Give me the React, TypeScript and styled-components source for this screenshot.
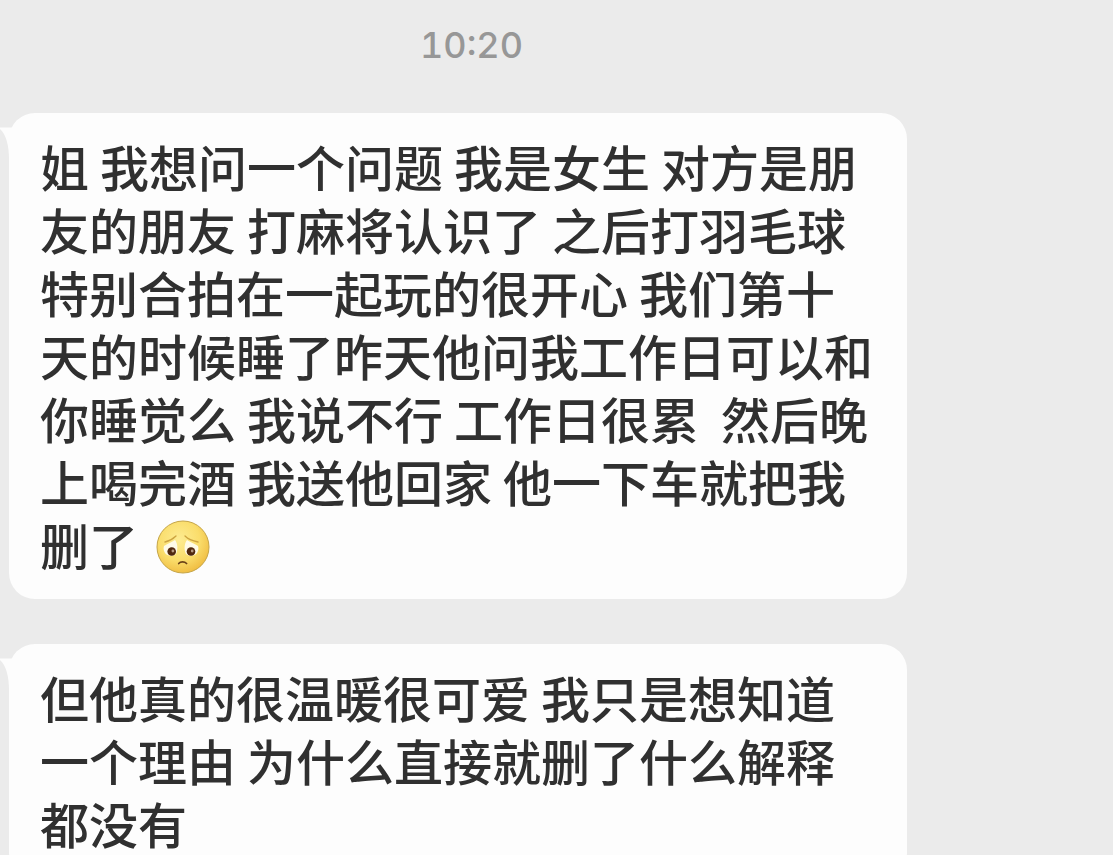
import React from "react";
import styled, { createGlobalStyle } from "styled-components";

const GlobalStyle = createGlobalStyle`
  * { box-sizing: border-box; }
  html, body { margin: 0; background: #ebebeb; }
  body { overflow: hidden; }
`;

const Chat = styled.main`
  height: 100vh;
  overflow: hidden;
  display: flex;
  flex-direction: column;
  font-family: "Noto Sans CJK SC", sans-serif;
  color: #303030;
`;

const Time = styled.time`
  margin: 23px 170px 46px 0;
  text-align: center;
  font: 500 36px/44px Inter, sans-serif;
  font-variant-numeric: tabular-nums;
  color: #979797;
`;

const Bubble = styled.article`
  position: relative;
  flex: none;
  margin: 0 206px 45px 9px;
  padding: 21px 32px 24px 31px;
  border-radius: 26px;
  background: #fdfdfd;
`;

const Tail = styled.svg`
  position: absolute;
  left: -9px;
  top: 12px;
`;

const Line = styled.p`
  margin: 0;
  font-size: 49px;
  line-height: 63px;
  font-weight: 500;
  white-space: pre;
`;

const Face = styled.svg`
  margin-left: 6px;
  vertical-align: -10px;
`;

function SadFace() {
  return (
    <Face width="56" height="56" viewBox="0 0 56 56" role="img" aria-label="sad face">
      <defs>
        <radialGradient id="skin" cx="0.42" cy="0.36" r="0.66">
          <stop offset="0" stopColor="#fdec92" />
          <stop offset="0.6" stopColor="#fadd6b" />
          <stop offset="1" stopColor="#f0bd42" />
        </radialGradient>
      </defs>
      <circle cx="28" cy="28" r="26" fill="url(#skin)" stroke="#c5a548" strokeWidth="1" />
      <path d="M9 27C12 25 17 23 20 21C23 25 23 31 21 35C18 38 12 37 10 34C9 32 8 30 9 27Z" fill="#fffbe8" />
      <path d="M43 27C40 25 35 23 32 21C29 25 29 31 31 35C34 38 40 37 42 34C43 32 44 30 43 27Z" fill="#fffbe8" />
      <g fill="none" stroke="#cda440" strokeWidth="1.3" strokeLinecap="round">
        <path d="M10 23C14 22 18 20 21 17" />
        <path d="M30 17C33 20 38 22 43 23" />
      </g>
      <circle cx="16.7" cy="32.5" r="4.3" fill="#50280f" />
      <circle cx="36" cy="32.5" r="4.3" fill="#50280f" />
      <circle cx="17.9" cy="32" r="1.4" fill="#b69a83" />
      <circle cx="37.2" cy="32" r="1.4" fill="#b69a83" />
      <path d="M23.7 44.5C25.5 42.4 29.5 42.4 31.6 44.5" fill="none" stroke="#6b4218" strokeWidth="1.7" strokeLinecap="round" />
    </Face>
  );
}

const messages = [
  {
    lines: [
      "姐 我想问一个问题 我是女生 对方是朋",
      "友的朋友 打麻将认识了 之后打羽毛球",
      "特别合拍在一起玩的很开心 我们第十",
      "天的时候睡了昨天他问我工作日可以和",
      "你睡觉么 我说不行 工作日很累  然后晚",
      "上喝完酒 我送他回家 他一下车就把我",
      "删了 ",
    ],
    sad: true,
  },
  {
    lines: ["但他真的很温暖很可爱 我只是想知道", "一个理由 为什么直接就删了什么解释", "都没有"],
    sad: false,
  },
];

export default function App() {
  return (
    <>
      <GlobalStyle />
      <Chat>
        <Time>10:20</Time>
        {messages.map(({ lines, sad }) => (
          <Bubble key={lines[0]}>
            <Tail width="34" height="40" viewBox="0 0 34 40" aria-hidden="true">
              <path d="M0 2.5H14L24 0V34H9C9 21 6 9 0 4Z" fill="#fdfdfd" />
            </Tail>
            {lines.map((text, i) => (
              <Line key={text}>
                {text}
                {sad && i === lines.length - 1 && <SadFace />}
              </Line>
            ))}
          </Bubble>
        ))}
      </Chat>
    </>
  );
}
